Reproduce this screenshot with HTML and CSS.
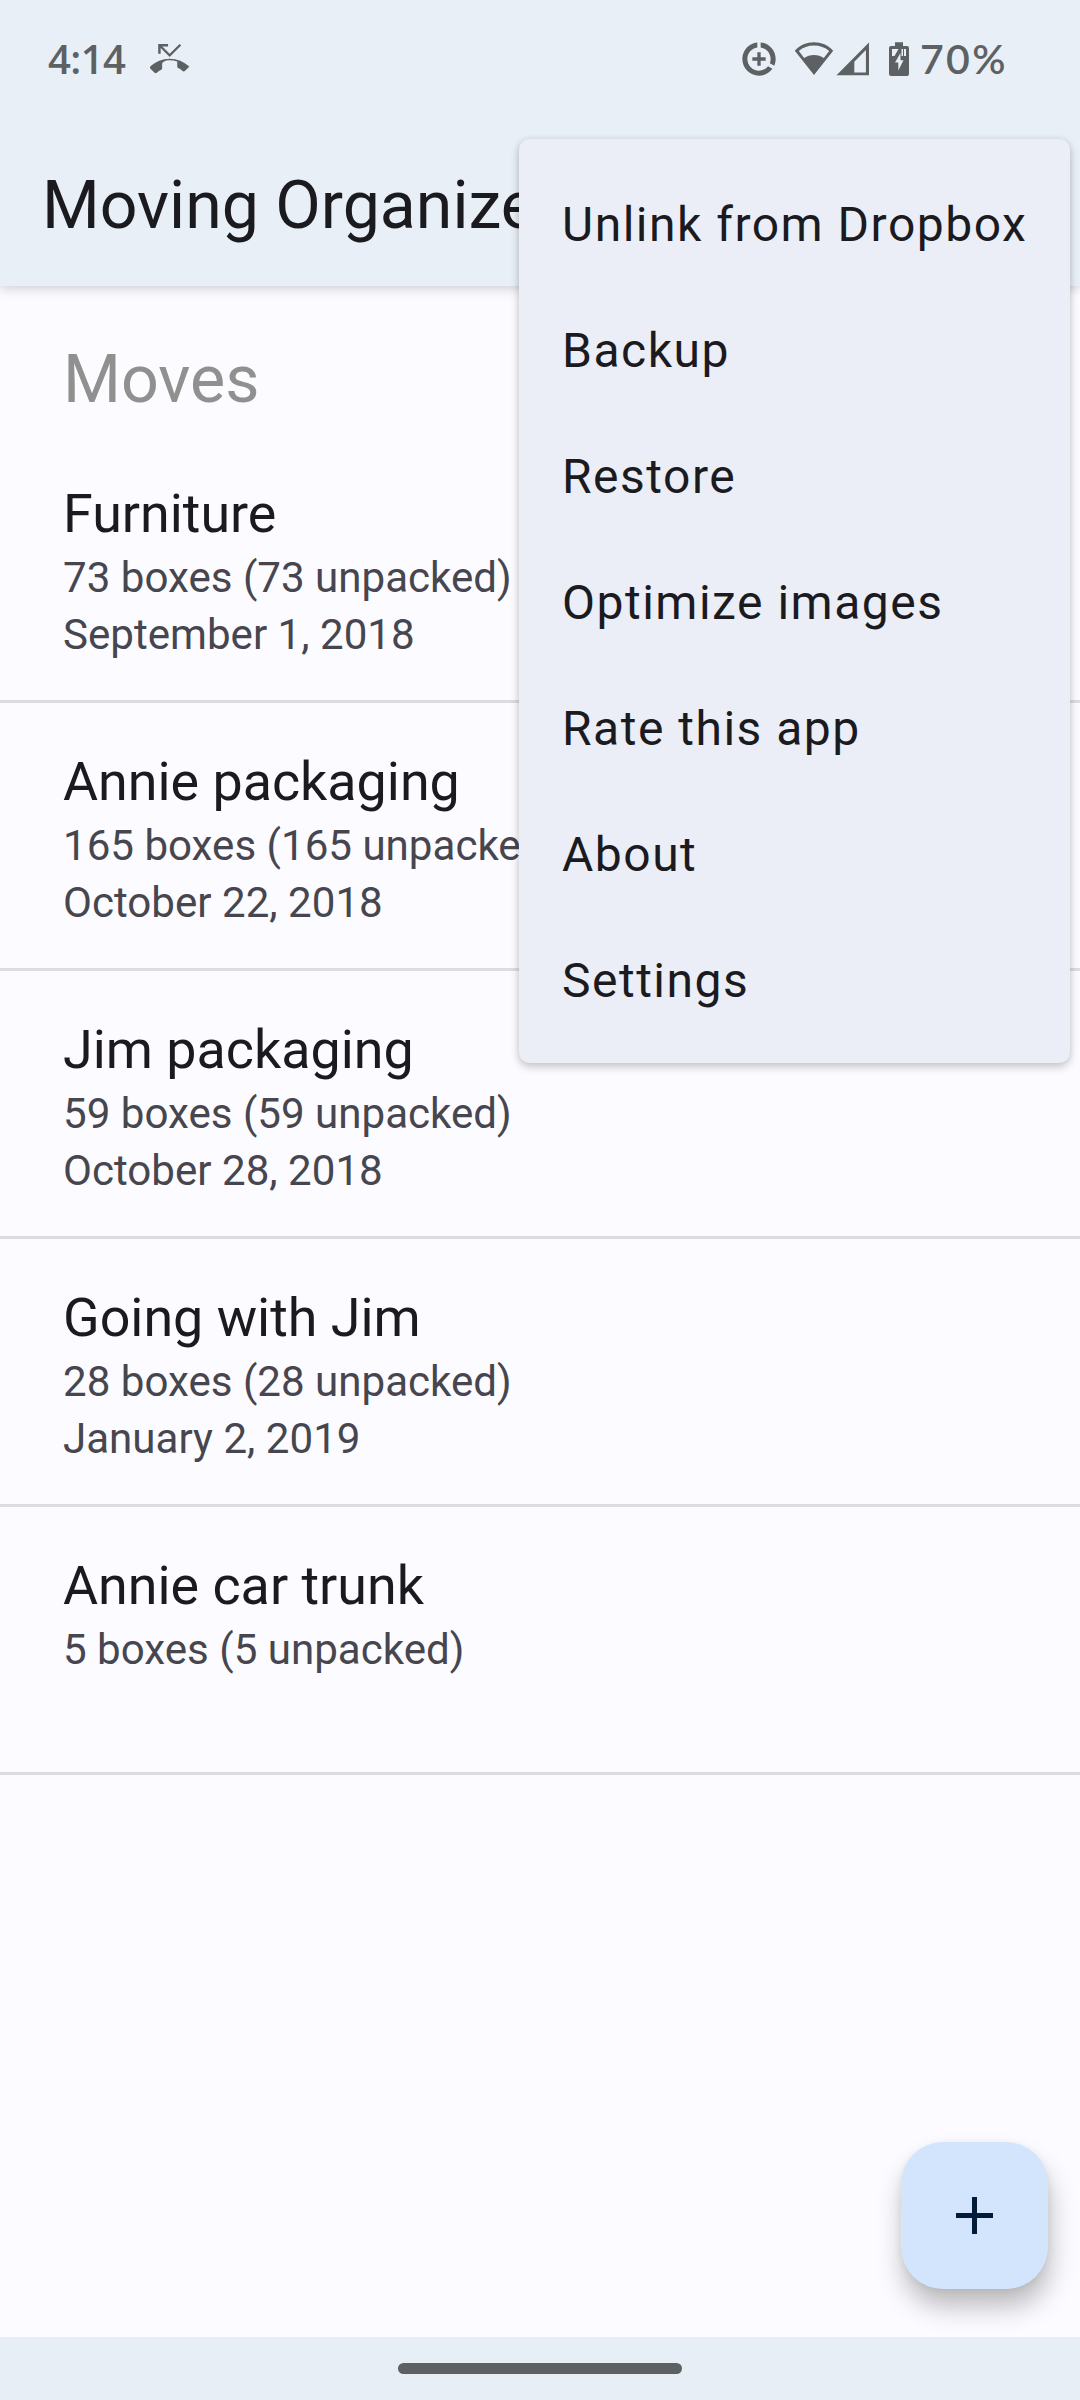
FILE: index.html
```html
<!DOCTYPE html>
<html lang="en">
<head>
<meta charset="utf-8">
<title>Moving Organizer</title>
<link rel="stylesheet" href="styles.css">
</head>
<body>
<div class="screen">
  <header class="top">
    <div class="status">
      <div class="status-left">
        <span class="clock">4:14</span>
        <svg class="missed" viewBox="0 0 24 24"><path d="M6.5 5.5L12 11l7-7-1-1-6 6-4.5-4.5H11V3H5v6h1.5V5.5zm17.21 11.17C20.66 13.78 16.54 12 12 12 7.46 12 3.34 13.78.29 16.67c-.18.18-.29.43-.29.71s.11.53.29.71l2.48 2.48c.18.18.43.29.71.29.27 0 .52-.11.7-.28.79-.74 1.69-1.36 2.66-1.85.33-.16.56-.5.56-.9v-3.1C8.85 13.25 10.4 13 12 13s3.15.25 4.6.72v3.1c0 .39.23.74.56.9.98.49 1.87 1.12 2.67 1.85.18.18.43.28.7.28.28 0 .53-.11.71-.29l2.48-2.48c.18-.18.29-.43.29-.71s-.12-.53-.3-.71z"/></svg>
      </div>
      <div class="status-right">
        <svg class="saver" viewBox="0 0 24 24"><path d="M11 8v3H8v2h3v3h2v-3h3v-2h-3V8h-2zm2-5.95v3.03c3.39.49 6 3.39 6 6.92 0 .9-.18 1.75-.48 2.54l2.6 1.53c.56-1.24.88-2.62.88-4.07 0-5.18-3.95-9.45-9-9.95zM12 19c-3.87 0-7-3.13-7-7 0-3.53 2.61-6.43 6-6.92V2.05c-5.06.5-9 4.76-9 9.95 0 5.52 4.47 10 9.99 10 3.31 0 6.24-1.61 8.06-4.09l-2.6-1.53C16.17 17.98 14.21 19 12 19z"/></svg>
        <svg class="wifi" viewBox="0 0 40 34"><path fill-rule="evenodd" d="M20 0.3C12.600 0.300 6 3.100 0.800 8.700L20 33L39.200 8.700C34 3.100 27.400 0.300 20 0.300ZM20 3.400C25.800 3.400 31 5.300 35.200 8.900L29.800 16C27 14 23.800 12.900 20 12.900C16.200 12.900 13 14 10.200 16L4.800 8.900C9 5.300 14.200 3.400 20 3.400Z"/></svg>
        <svg class="signal" viewBox="0 0 34 34"><path fill-rule="evenodd" d="M0.500 33.300L33 0.500V33.300ZM29.900 8L18.300 19.700V30.500H29.900Z"/></svg>
        <svg class="battery" viewBox="0 0 20 34"><path fill-rule="evenodd" d="M6 0.300H14V4H18Q20 4 20 6V32Q20 34 18 34H2Q0 34 0 32V6Q0 4 2 4H6ZM3 7V14H5.500L9.500 7ZM12.500 7V14H14V7ZM15 7V14H17V7ZM11.500 11L6 20.500H9.300V28.500L14.500 18.200H11.500Z"/></svg>
        <span class="percent">70%</span>
      </div>
    </div>
    <h1 class="title">Moving Organizer</h1>
  </header>
  <main class="content">
    <h2 class="heading">Moves</h2>
    <ul class="moves">
      <li class="move"><span class="name">Furniture</span><span class="detail">73 boxes (73 unpacked)</span><span class="detail">September 1, 2018</span></li>
      <li class="move"><span class="name">Annie packaging</span><span class="detail">165 boxes (165 unpacked)</span><span class="detail">October 22, 2018</span></li>
      <li class="move"><span class="name">Jim packaging</span><span class="detail">59 boxes (59 unpacked)</span><span class="detail">October 28, 2018</span></li>
      <li class="move"><span class="name">Going with Jim</span><span class="detail">28 boxes (28 unpacked)</span><span class="detail">January 2, 2019</span></li>
      <li class="move"><span class="name">Annie car trunk</span><span class="detail">5 boxes (5 unpacked)</span></li>
    </ul>
  </main>
  <footer class="nav"><div class="pill"></div></footer>
  <button class="fab" aria-label="Add move"><svg viewBox="0 0 37 37"><path d="M16 0h5v16h16v5H21v16h-5V21H0v-5h16z"/></svg></button>
  <ul class="menu">
    <li>Unlink from Dropbox</li>
    <li>Backup</li>
    <li>Restore</li>
    <li>Optimize images</li>
    <li>Rate this app</li>
    <li>About</li>
    <li>Settings</li>
  </ul>
</div>
</body>
</html>
```
FILE: styles.css
```css
* { box-sizing: border-box; }
body { margin: 0; font-family: Roboto, sans-serif; color: #1b1b1f; }
h1, h2, ul { margin: 0; padding: 0; font-weight: 400; list-style: none; }
svg { display: block; fill: currentColor; }

.screen {
  position: relative;
  display: flex;
  flex-direction: column;
  width: 1080px;
  height: 2400px;
  overflow: hidden;
  background: #fcfbff;
}

.top {
  height: 286px;
  background: #e8eff6;
  box-shadow: 0 2px 12px rgba(0, 0, 0, 0.2);
}

.status {
  display: flex;
  justify-content: space-between;
  height: 118px;
  padding: 0 75px 0 48px;
  color: #5d6164;
  font-family: "Open Sans", sans-serif;
  font-weight: 600;
}
.status-left, .status-right { display: flex; align-items: center; }
.clock { width: 102px; font-size: 40px; line-height: 118px; letter-spacing: -0.6px; white-space: nowrap; }
.missed { width: 39.4px; height: 39.4px; }
.saver { width: 40px; height: 40px; margin-right: 15.5px; }
.wifi { width: 40px; height: 34px; margin-right: 2px; }
.signal { width: 34px; height: 34px; margin-right: 19px; }
.battery { width: 20px; height: 34px; margin-right: 11px; }
.percent { width: 85px; font-family: Lato, sans-serif; font-size: 41px; line-height: 118px; letter-spacing: 2.3px; white-space: nowrap; }

.title {
  padding: 7px 42px 0;
  font-size: 66.2px;
  line-height: 161px;
  white-space: nowrap;
}

.content { flex: 1; }
.heading {
  height: 149px;
  padding: 19px 63px 0;
  font-size: 66.4px;
  line-height: 148px;
  color: #909090;
}
.move {
  display: flex;
  flex-direction: column;
  height: 268px;
  padding: 43px 63px 0;
  border-bottom: 3px solid #dddce1;
}
.name { font-size: 53.8px; line-height: 71px; }
.detail { font-size: 42.1px; line-height: 57px; color: #47464f; }

.nav {
  display: flex;
  justify-content: center;
  height: 63px;
  padding-top: 26px;
  background: #e7eef6;
  z-index: 1;
}
.pill { width: 284px; height: 11px; border-radius: 5.5px; background: #5d6164; }

.fab {
  position: absolute;
  right: 32px;
  bottom: 111px;
  display: flex;
  align-items: center;
  justify-content: center;
  width: 147px;
  height: 147px;
  padding: 0;
  border: 0;
  border-radius: 42px;
  color: #001c38;
  background: #d3e5fd;
  box-shadow: 2px 18px 26px rgba(0, 0, 0, 0.25), 0 2px 8px rgba(0, 0, 0, 0.06);
}
.fab svg { width: 37px; height: 37px; }

.menu {
  position: absolute;
  top: 139px;
  left: 519px;
  width: 551px;
  height: 924px;
  padding: 23px 41px 0 43px;
  border-radius: 10.5px;
  background: #ebeef6;
  box-shadow: 0 4px 10px rgba(0, 0, 0, 0.2), 0 0 6px rgba(0, 0, 0, 0.08);
}
.menu li {
  height: 126px;
  font-size: 48px;
  line-height: 126px;
  letter-spacing: 1.5px;
  white-space: nowrap;
}
```
